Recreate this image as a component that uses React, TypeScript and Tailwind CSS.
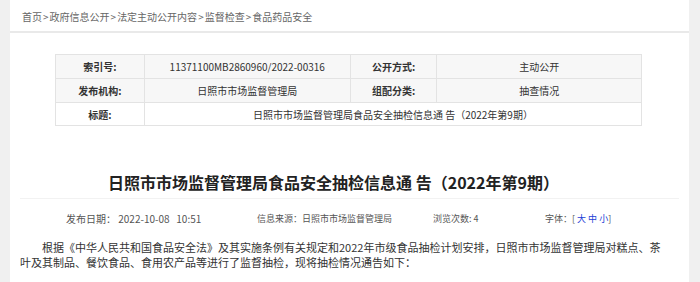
const crumbs = ["首页", "政府信息公开", "法定主动公开内容", "监督检查", "食品药品安全"];

function InfoTable() {
  const cell = "border border-[#e3e3e3] text-center align-middle";
  return (
    <table className="ml-[45px] mt-[21px] w-[587px] border-collapse text-[10px] text-[#333]">
      <colgroup>
        <col className="w-[89px]" />
        <col className="w-[206px]" />
        <col className="w-[87px]" />
        <col className="w-[205px]" />
      </colgroup>
      <tbody>
        <tr className="h-[24px] bg-[#f7f7f7]">
          <td className={`${cell} font-bold`}>索引号:</td>
          <td className={cell}>11371100MB2860960/2022-00316</td>
          <td className={`${cell} font-bold`}>公开方式:</td>
          <td className={cell}>主动公开</td>
        </tr>
        <tr className="h-[24px] bg-[#f7f7f7]">
          <td className={`${cell} font-bold`}>发布机构:</td>
          <td className={cell}>日照市市场监督管理局</td>
          <td className={`${cell} font-bold`}>组配分类:</td>
          <td className={cell}>抽查情况</td>
        </tr>
        <tr className="h-[23px] bg-white">
          <td className={`${cell} font-bold`}>标题:</td>
          <td className={cell} colSpan={3}>
            日照市市场监督管理局食品安全抽检信息通 告（2022年第9期）
          </td>
        </tr>
      </tbody>
    </table>
  );
}

export default function App() {
  return (
    <div
      className="flex h-[282px] w-[700px] overflow-hidden bg-[#f0f0f0]"
      style={{ fontFamily: '"Noto Sans CJK SC", "Noto Sans", sans-serif' }}
    >
      <div className="ml-[10px] w-[679px] bg-white">
        <div className="flex h-[31px] items-center px-[12px] pt-[1px] text-[10px] text-[#666]">
          {crumbs.map((c, i) => (
            <span key={c} className="flex items-center">
              {i > 0 ? <span className="px-[1px]">&gt;</span> : null}
              {c}
            </span>
          ))}
        </div>
        <div className="h-[2px] bg-[#e9e9e9]" />

        <InfoTable />

        <div className="mx-[10px] mt-[44px] border-b border-[#f2f2f2] pb-[4px] pr-[32px] text-center text-[16px] font-bold leading-[24px] text-[#222]">
          日照市市场监督管理局食品安全抽检信息通 告（2022年第9期）
        </div>

        <div className="mt-[12px] flex items-center pl-[56px] text-[10px] leading-[16px] text-[#555]">
          <span className="w-[191px] whitespace-pre">发布日期： 2022-10-08   10:51</span>
          <span className="w-[176px] text-[9px]">信息来源：日照市市场监督管理局</span>
          <span className="w-[112px] text-[9px]">浏览次数: 4</span>
          <span className="text-[9px]">
            字体：[ <span className="text-[#2340d6]">大</span>{" "}
            <span className="text-[#2340d6]">中</span>{" "}
            <span className="text-[#2340d6]">小</span>]
          </span>
        </div>

        <p className="mt-[13px] pl-[10px] pr-[22px] indent-[22px] text-[11px] leading-[15px] text-[#333]">
          根据《中华人民共和国食品安全法》及其实施条例有关规定和2022年市级食品抽检计划安排，日照市市场监督管理局对糕点、茶叶及其制品、餐饮食品、食用农产品等进行了监督抽检，现将抽检情况通告如下：
        </p>
      </div>
    </div>
  );
}
